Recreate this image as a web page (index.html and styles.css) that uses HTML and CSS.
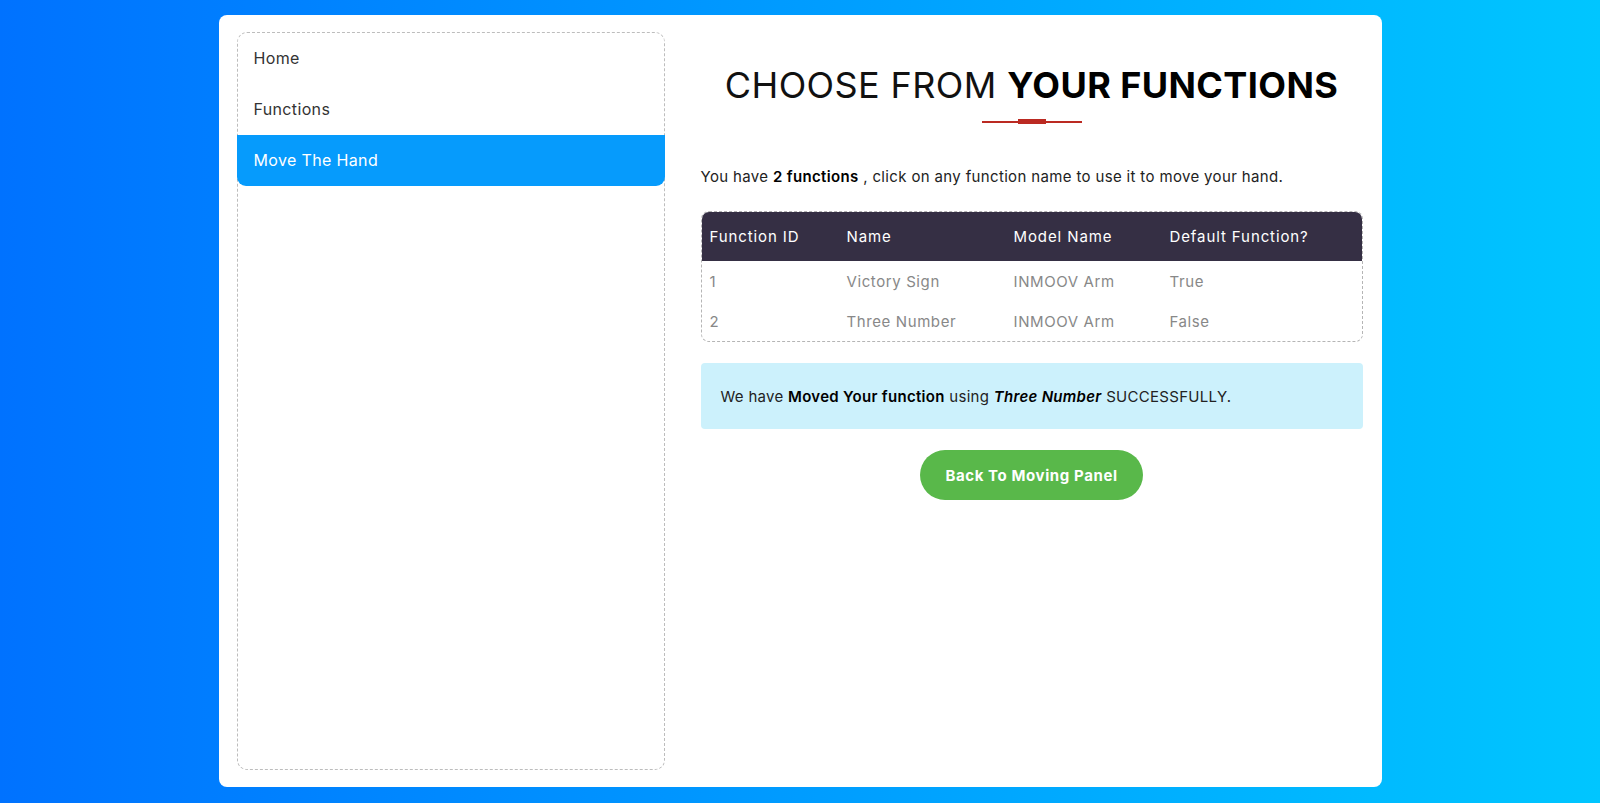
FILE: index.html
```html
<!DOCTYPE html>
<html lang="en">
<head>
<meta charset="utf-8">
<title>Move The Hand</title>
<link rel="stylesheet" href="styles.css">
</head>
<body>
<div class="card">
  <aside class="sidebar">
    <a class="nav-item" href="#">Home</a>
    <a class="nav-item" href="#">Functions</a>
    <a class="nav-item active" href="#">Move The Hand</a>
  </aside>
  <main class="main">
    <h1 class="title">CHOOSE FROM <strong>YOUR FUNCTIONS</strong></h1>
    <div class="divider"><span class="divider-block"></span></div>
    <p class="intro">You have <strong>2 functions</strong> , click on any function name to use it to move your hand.</p>
    <div class="table-wrap">
      <table class="fn-table">
        <thead>
          <tr><th class="c1">Function ID</th><th class="c2">Name</th><th class="c3">Model Name</th><th>Default Function?</th></tr>
        </thead>
        <tbody>
          <tr><td>1</td><td>Victory Sign</td><td>INMOOV Arm</td><td>True</td></tr>
          <tr><td>2</td><td>Three Number</td><td>INMOOV Arm</td><td>False</td></tr>
        </tbody>
      </table>
    </div>
    <div class="alert">We have <strong>Moved Your function</strong> using <strong><em>Three Number</em></strong> SUCCESSFULLY.</div>
    <div class="actions"><a class="btn" href="#">Back To Moving Panel</a></div>
  </main>
</div>
</body>
</html>
```

FILE: styles.css
```css
* { box-sizing: border-box; }
html, body { margin: 0; height: 100%; }
body {
  background: linear-gradient(to right, #0072ff, #00c6ff);
  font-family: "Inter", "Noto Sans", sans-serif;
  padding-top: 15px;
}
.card {
  width: 1163px;
  height: 772px;
  margin: 0 auto;
  background: #fff;
  border-radius: 8px;
  padding: 17px 19px 17px 18px;
  display: grid;
  grid-template-columns: 428px 1fr;
  column-gap: 36px;
}
.sidebar {
  border: 1px dashed #bdbdbd;
  border-radius: 10px;
  display: flex;
  flex-direction: column;
}
.nav-item {
  display: flex;
  align-items: center;
  height: 51px;
  padding-left: 16px;
  padding-bottom: 2px;
  font-size: 16px;
  letter-spacing: 0.35px;
  color: #333;
  text-decoration: none;
}
.nav-item.active {
  background: #069bfc;
  color: #fff;
  border-radius: 0 0 9px 9px;
  margin: 0 -1px;
  padding-left: 17px;
}
.main { display: flex; flex-direction: column; }
.title {
  margin: 32px 0 0;
  text-align: center;
  font-size: 36px;
  line-height: 42px;
  font-weight: 400;
  color: #111;
  letter-spacing: 0.4px;
}
.title strong { font-weight: 700; color: #000; }
.divider {
  margin: 13px auto 0;
  width: 100px;
  height: 5px;
  display: flex;
  align-items: center;
  justify-content: center;
  background: linear-gradient(#bb2a22, #bb2a22) center / 100% 2px no-repeat;
}
.divider-block { width: 28px; height: 5px; background: #bb2a22; }
.intro {
  margin: 42px 0 0;
  font-size: 15px;
  line-height: 22px;
  letter-spacing: 0.35px;
  color: #222;
}
.intro strong { font-weight: 600; color: #000; }
.table-wrap {
  margin-top: 23px;
  border: 1px dashed #b5b5b5;
  border-radius: 8px;
  overflow: hidden;
}
.fn-table { width: 100%; border-collapse: collapse; font-size: 15px; letter-spacing: 0.6px; }
.fn-table th {
  background: #352f44;
  color: #fff;
  font-weight: 400;
  text-align: left;
  height: 49px;
  padding: 0 8px;
  letter-spacing: 0.9px;
}
.fn-table td { color: #888; height: 40px; padding: 0 8px; }
.fn-table .c1 { width: 137px; }
.fn-table .c2 { width: 167px; }
.fn-table .c3 { width: 156px; }
.alert {
  margin-top: 21px;
  background: #ccf1fc;
  border-radius: 4px;
  height: 66px;
  padding: 0 20px;
  display: flex;
  align-items: center;
  font-size: 15px;
  letter-spacing: 0.3px;
  color: #222;
  white-space: pre;
}
.alert strong { font-weight: 600; color: #000; }
.actions { display: flex; justify-content: center; margin-top: 21px; }
.btn {
  width: 223px;
  height: 50px;
  border-radius: 25px;
  background: #59b84a;
  color: #fff;
  font-weight: 700;
  font-size: 15px;
  letter-spacing: 0.6px;
  text-decoration: none;
  display: flex;
  align-items: center;
  justify-content: center;
}
```
